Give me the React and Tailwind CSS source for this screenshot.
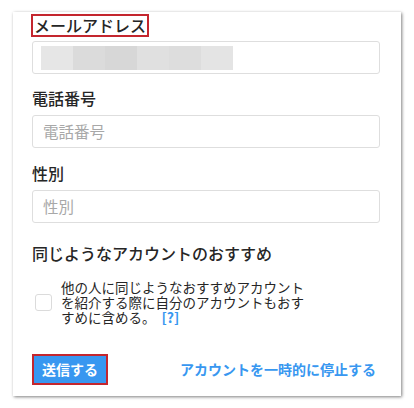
import React from "react";

const font = { fontFamily: '"Noto Sans CJK JP", "Noto Sans", sans-serif' };

function Label({ children, className = "" }) {
  return (
    <div className={`text-[16px] leading-[20px] font-medium text-[#262626] ${className}`}>
      {children}
    </div>
  );
}

function Input({ placeholder, className = "", children }) {
  return (
    <div
      className={`relative h-[33px] w-full rounded-[3px] border border-[#dedede] bg-white flex items-center pl-[10px] text-[15.5px] text-[#a8a8a8] ${className}`}
    >
      {children || placeholder}
    </div>
  );
}

export default function App() {
  return (
    <div
      className="w-[414px] h-[408px] bg-white pt-[12px] pl-[13px] overflow-hidden"
      style={font}
    >
      <div className="w-[388px] h-[384px] bg-white shadow-[1px_1px_3px_rgba(0,0,0,0.5)] pl-[19px] pr-[21px] pt-[2px] flex flex-col">
        <div className="flex">
          <div className="ml-[-1px] border-2 border-[#c4262e] px-[1px] text-[16px] leading-[19px] font-medium text-[#262626]">
            メールアドレス
          </div>
        </div>
        <Input className="mt-[4px] !pl-[8px]">
          <div className="flex h-[24px]">
            <div className="w-[32px] bg-[#e6e6e6]" />
            <div className="w-[32px] bg-[#dbdbdb]" />
            <div className="w-[32px] bg-[#d7d7d7]" />
            <div className="w-[32px] bg-[#e0e0e0]" />
            <div className="w-[32px] bg-[#dddddd]" />
            <div className="w-[32px] bg-[#e4e4e4]" />
          </div>
        </Input>

        <Label className="mt-[14px]">電話番号</Label>
        <Input className="mt-[7px]" placeholder="電話番号" />

        <Label className="mt-[15px]">性別</Label>
        <Input className="mt-[7px]" placeholder="性別" />

        <Label className="mt-[20px]">同じようなアカウントのおすすめ</Label>

        <div className="mt-[17px] flex items-center">
          <div className="ml-[3px] w-[17px] h-[17px] rounded-[3px] border border-[#dbdbdb] bg-white shrink-0" />
          <div className="ml-[9px] text-[13.5px] leading-[15px] text-[#262626]">
            他の人に同じようなおすすめアカウント
            <br />
            を紹介する際に自分のアカウントもおす
            <br />
            すめに含める。
            <span className="ml-[6px] text-[14px] text-[#3897f0] font-semibold">[?]</span>
          </div>
        </div>

        <div className="mt-[29px] flex items-center justify-between">
          <div className="border-2 border-[#c4262e]">
            <div className="w-[72px] h-[27px] bg-[#3897f0] flex items-center justify-center text-white text-[14px] font-semibold">
              送信する
            </div>
          </div>
          <div className="mr-[4px] text-[#3897f0] text-[14px] font-semibold">
            アカウントを一時的に停止する
          </div>
        </div>
      </div>
    </div>
  );
}
